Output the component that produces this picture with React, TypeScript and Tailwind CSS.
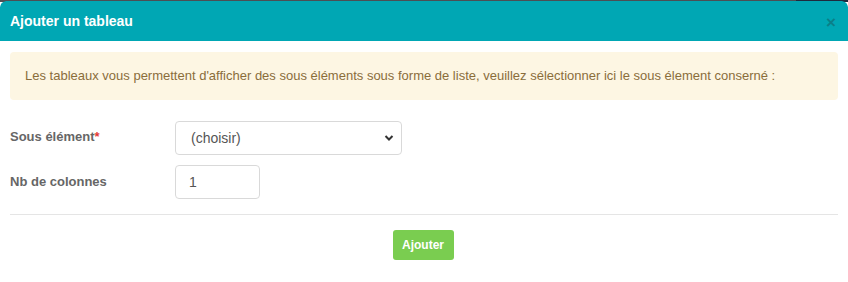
import React from "react";

export default function App() {
  return (
    <div className="w-[848px] h-[282px] bg-white overflow-hidden relative" style={{ fontFamily: '"Liberation Sans", Arial, sans-serif' }}>
      <div className="flex h-[2px]">
        <div className="flex-1 bg-[#4b4f54]" />
        <div className="w-[52px] bg-[#1f2a3d]" />
      </div>
      <div className="h-[calc(100%-2px)] flex flex-col rounded-t-[6px] rounded-b-[4px] overflow-hidden bg-white -mt-[1px]">
        <div className="h-[40px] bg-[#00a7b4] flex items-center justify-between pl-[10px] pr-[12px] rounded-t-[6px]">
          <span className="text-white font-bold text-[14px] leading-none">Ajouter un tableau</span>
          <span className="text-[#0b7f88] font-bold text-[17px] leading-none mt-[2px]">×</span>
        </div>
        <div className="px-[10px] pt-[11px]">
          <div className="bg-[#fdf6e3] rounded-[4px] h-[48px] flex items-center pl-[15px] text-[13px] text-[#8a6d3b]">
            Les tableaux vous permettent d'afficher des sous éléments sous forme de liste, veuillez sélectionner ici le sous élement conserné :
          </div>
          <div className="mt-[21px] flex items-center">
            <label className="w-[165px] font-bold text-[13px] text-[#666] -mt-[3px]">
              Sous élément<span className="text-[#e53935]">*</span>
            </label>
            <div className="w-[227px] h-[34px] border border-[#d9d9d9] rounded-[4px] flex items-center justify-between pl-[15px] pr-[7px] text-[14px] text-[#555]">
              <span>(choisir)</span>
              <svg width="10" height="8" viewBox="0 0 10 8">
                <path d="M1.5 2 L5 5.5 L8.5 2" fill="none" stroke="#333" strokeWidth="2" />
              </svg>
            </div>
          </div>
          <div className="mt-[10px] flex items-center">
            <label className="w-[165px] font-bold text-[13px] text-[#666]">Nb de colonnes</label>
            <div className="w-[85px] h-[34px] border border-[#d9d9d9] rounded-[4px] flex items-center pl-[13px] text-[14px] text-[#555]">
              1
            </div>
          </div>
          <div className="mt-[15px] h-px bg-[#e5e5e5]" />
          <div className="flex justify-center mt-[15px]">
            <button className="w-[61px] h-[30px] bg-[#7acd50] rounded-[3px] text-white font-bold text-[12px] ml-[-2px]">
              Ajouter
            </button>
          </div>
        </div>
      </div>
    </div>
  );
}
